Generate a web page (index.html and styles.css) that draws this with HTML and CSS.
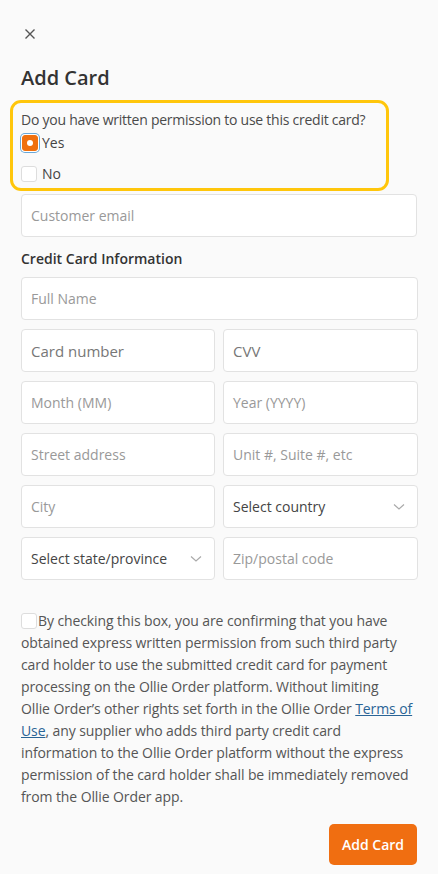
FILE: index.html
```html
<!DOCTYPE html>
<html>
<head>
<meta charset="utf-8">
<link rel="stylesheet" href="styles.css">
</head>
<body>
<div class="page">
  <button class="close" aria-label="Close">
    <svg width="12" height="12" viewBox="0 0 12 12"><path d="M1.5 1.5L10.5 10.5M10.5 1.5L1.5 10.5" stroke="#555" stroke-width="1.4" fill="none"/></svg>
  </button>
  <h1 class="title">Add Card</h1>
  <div class="permission">
    <div class="question">Do you have written permission to use this credit card?</div>
    <label class="option option-yes"><span class="radio checked"><span class="dot"></span></span>Yes</label>
    <label class="option option-no"><span class="radio"></span>No</label>
  </div>
  <div class="field full email"><span class="ph">Customer email</span></div>
  <h2 class="section">Credit Card Information</h2>
  <div class="grid">
    <div class="field full"><span class="ph">Full Name</span></div>
    <div class="field"><span class="ph dark">Card number</span></div>
    <div class="field"><span class="ph dark">CVV</span></div>
    <div class="field"><span class="ph">Month (MM)</span></div>
    <div class="field"><span class="ph">Year (YYYY)</span></div>
    <div class="field"><span class="ph">Street address</span></div>
    <div class="field"><span class="ph">Unit #, Suite #, etc</span></div>
    <div class="field"><span class="ph">City</span></div>
    <div class="field select"><span class="val">Select country</span><svg class="chev" width="12" height="8" viewBox="0 0 12 8"><path d="M1 1.5L6 6L11 1.5" stroke="#aaa" stroke-width="1.2" fill="none"/></svg></div>
    <div class="field select"><span class="val">Select state/province</span><svg class="chev" width="12" height="8" viewBox="0 0 12 8"><path d="M1 1.5L6 6L11 1.5" stroke="#aaa" stroke-width="1.2" fill="none"/></svg></div>
    <div class="field"><span class="ph">Zip/postal code</span></div>
  </div>
  <p class="disclaimer"><span class="box"></span>By checking this box, you are confirming that you have obtained express written permission from such third party card holder to use the submitted credit card for payment processing on the Ollie Order platform. Without limiting<br>Ollie Order’s other rights set forth in the Ollie Order <a href="#">Terms of Use</a>, any supplier who adds third party credit card<br>information to the Ollie Order platform without the express<br>permission of the card holder shall be immediately removed from the Ollie Order app.</p>
  <div class="actions"><button class="submit">Add Card</button></div>
</div>
</body>
</html>
```
FILE: styles.css
```css
* { box-sizing: border-box; }
html, body { margin: 0; padding: 0; }
body {
  background: #fafafa;
  font-family: "Open Sans", "Noto Sans", sans-serif;
  color: #444;
  font-size: 14px;
}
.page {
  padding: 24px 21px 0 21px;
  display: flex;
  flex-direction: column;
}
.close {
  border: 0;
  background: none;
  padding: 0;
  margin-left: 3px;
  width: 12px;
  height: 20px;
  display: flex;
  align-items: center;
}
.title {
  margin: 21px 0 0 0;
  font-size: 20px;
  font-weight: 600;
  color: #333;
  line-height: 26px;
}
.permission {
  margin: 9px -11px 0 -11px;
  width: 379px;
  border: 3px solid #ffc60b;
  border-radius: 11px;
  padding: 7px 4px 2px 8px;
}
.question {
  line-height: 20px;
  color: #4a4a4a;
  white-space: nowrap;
  letter-spacing: -0.25px;
}
.option {
  display: flex;
  align-items: center;
  color: #444;
  line-height: 20px;
}
.option-yes { margin-top: 3px; }
.option-no { margin-top: 11px; margin-bottom: 2px; }
.radio {
  width: 16px;
  height: 16px;
  border: 1px solid #ddd;
  border-radius: 3px;
  background: #fff;
  margin-right: 5px;
  display: flex;
  align-items: center;
  justify-content: center;
}
.radio.checked {
  background: #f0700f;
  border-color: #f0700f;
  box-shadow: 0 0 0 1px #fff, 0 0 0 2px #6aa8d8;
  margin-left: 1px;
  margin-right: 4px;
}
.dot {
  width: 6px;
  height: 6px;
  border-radius: 50%;
  background: #fff;
}
.field {
  height: 43px;
  background: #fff;
  border: 1px solid #e2e2e2;
  border-radius: 4px;
  display: flex;
  align-items: center;
  padding: 0 9px;
  font-size: 14px;
}
.email { margin-top: 3px; }
.ph { color: #999; }
.ph.dark { color: #777; font-size: 15px; }
.val { color: #444; font-size: 14px; flex: 1; }
.chev { margin-right: 3px; }
.section {
  margin: 12px 0 0 0;
  font-size: 14px;
  font-weight: 600;
  color: #333;
  line-height: 20px;
}
.grid {
  margin-top: 8px;
  display: grid;
  grid-template-columns: 194px 195px;
  column-gap: 8px;
  row-gap: 9px;
}
.grid .full { grid-column: 1 / -1; }
.disclaimer {
  margin: 30px 0 0 0;
  line-height: 22px;
  color: #555;
  font-size: 14px;
  letter-spacing: -0.1px;
}
.box {
  display: inline-block;
  width: 16px;
  height: 16px;
  border: 1px solid #ddd;
  border-radius: 3px;
  background: #fff;
  vertical-align: -3px;
  margin-right: 1px;
}
.disclaimer a { color: #2a6496; text-decoration: underline; }
.actions {
  display: flex;
  justify-content: flex-end;
  margin-top: 16px;
}
.submit {
  background: #f06e11;
  color: #fff;
  border: 0;
  border-radius: 5px;
  width: 88px;
  height: 41px;
  font-family: inherit;
  font-size: 14px;
  font-weight: 600;
}
```
